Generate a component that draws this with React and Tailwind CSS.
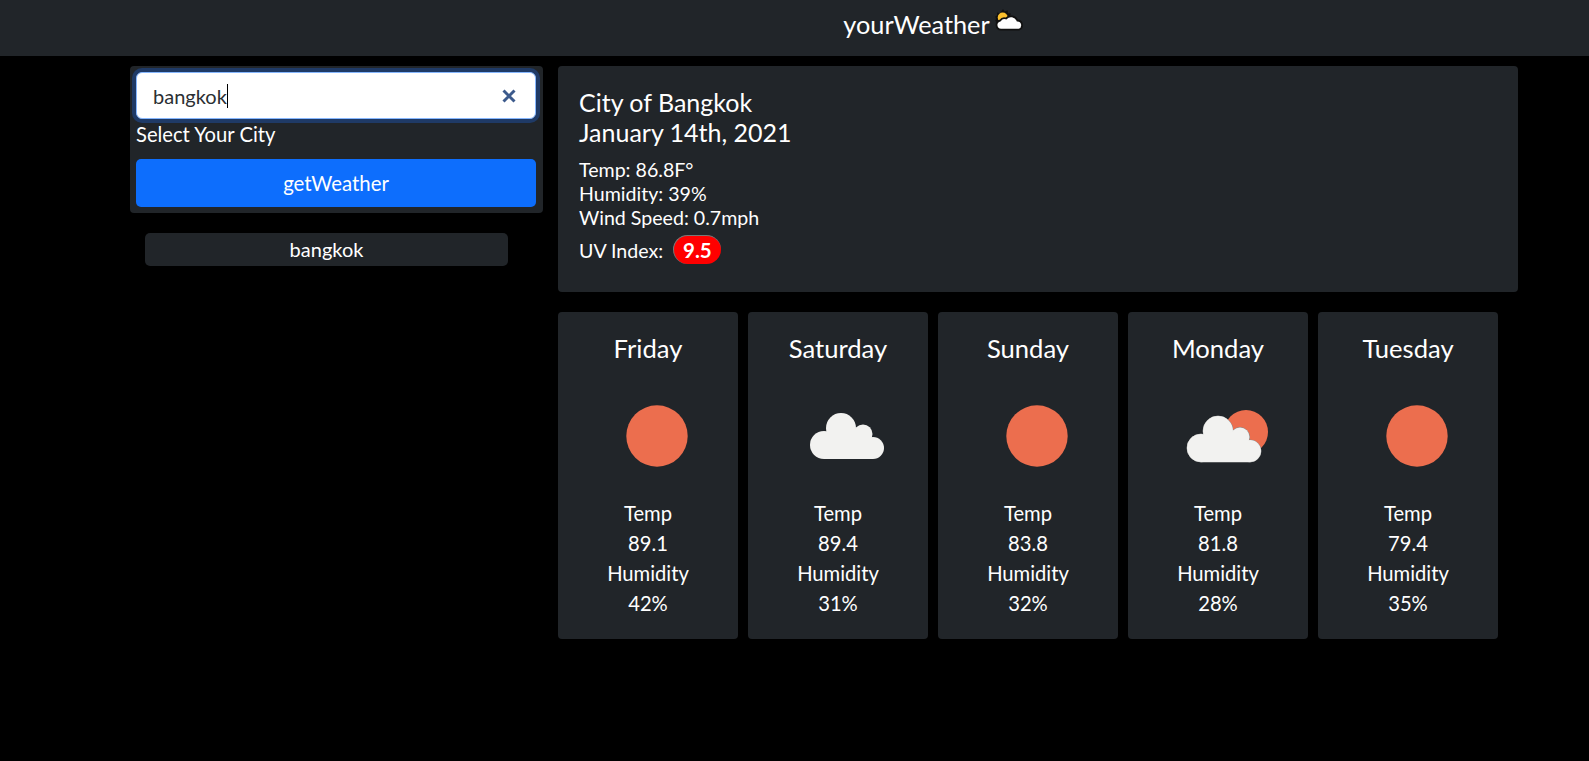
const days = [
  { day: "Friday", icon: "sun", temp: "89.1", humidity: "42%" },
  { day: "Saturday", icon: "cloud", temp: "89.4", humidity: "31%" },
  { day: "Sunday", icon: "sun", temp: "83.8", humidity: "32%" },
  { day: "Monday", icon: "partly", temp: "81.8", humidity: "28%" },
  { day: "Tuesday", icon: "sun", temp: "79.4", humidity: "35%" },
];

function CloudShape({ fill, stroke }) {
  return (
    <g fill={fill} stroke={stroke} strokeWidth={stroke ? 1 : 0}>
      <circle cx="44" cy="55" r="14" />
      <circle cx="61" cy="38" r="15" />
      <circle cx="83" cy="44" r="9.5" />
      <circle cx="93" cy="58" r="11" />
      <rect x="44" y="48" width="49" height="21" />
      <rect x="55" y="43" width="32" height="10" />
    </g>
  );
}

// all three weather icons share a 130x90 box
function WeatherIcon({ icon }) {
  return (
    <svg viewBox="0 0 130 90" className="w-[130px] h-[90px]">
      {icon === "sun" && <circle cx="74" cy="46" r="30.7" fill="#ec6e4e" />}
      {icon === "cloud" && (
        <g transform="translate(7 0)">
          <CloudShape fill="#f2f2f0" />
        </g>
      )}
      {icon === "partly" && (
        <g transform="translate(7 0)">
          <circle cx="86" cy="42" r="22" fill="#ec6e4e" />
          <g transform="translate(-3 3)">
            <CloudShape fill="#8a8c8c" stroke="#8a8c8c" />
            <CloudShape fill="#f2f2f0" />
          </g>
        </g>
      )}
    </svg>
  );
}

function HeaderEmoji() {
  return (
    <svg viewBox="0 0 28 22" className="w-[28px] h-[22px] ml-[5px] mb-[10px]">
      <path d="M8 0l1.8 2.4 2.8-1.2 0.4 3 3 0.4-1.2 2.8 2 2-6 7-8-3-2.6-1.4 0.8-2.2-0.8-2.4 1.8-0.8 0-3 3 0.6z" fill="#111" />
      <circle cx="7.7" cy="8.6" r="5" fill="#fbc02d" />
      <path d="M6 20.6a4.6 4.6 0 0 1-0.8-9.1 5 5 0 0 1 5.8-2 7 7 0 0 1 11.4 2 4.7 4.7 0 0 1 1.6 9.1z" fill="#fff" stroke="#111" strokeWidth="1.8" />
    </svg>
  );
}

export default function App() {
  return (
    <div className="min-h-[761px] bg-black text-white font-['Lato','Carlito',sans-serif]">
      <header className="h-[56px] bg-[#212529] flex items-center justify-center pl-[277px] pb-[6px]">
        <span className="text-[25.3px] leading-none">yourWeather</span>
        <HeaderEmoji />
      </header>

      <main className="flex items-start pl-[130px] pt-[10px]">
        <aside className="w-[413px] shrink-0">
          <div className="bg-[#212529] rounded-[4px] pl-[6px] pr-[7px] py-[6px]">
            <div className="h-[47px] bg-white rounded-[6px] border border-[#86b7fe] ring-4 ring-[#1f3a66] flex items-center justify-between pl-[16px] pr-[18px]">
              <span className="text-[20px] text-[#2b2f33] border-r border-black leading-[24px]">bangkok</span>
              <svg viewBox="0 0 16 16" className="w-[16px] h-[16px]">
                <path d="M2.5 2.5l11 11M13.5 2.5l-11 11" stroke="#3c5a8c" strokeWidth="3" fill="none" />
              </svg>
            </div>
            <div className="text-[20.2px] leading-[27px] mt-[2px]">Select Your City</div>
            <button className="mt-[11px] w-full h-[48px] bg-[#0d6efd] rounded-[5px] text-[20.4px] text-white">getWeather</button>
          </div>
          <button className="block ml-[15px] mt-[20px] w-[363px] h-[33px] pb-[1px] bg-[#212529] rounded-[5px] text-[20px] text-white">bangkok</button>
        </aside>

        <section className="ml-[15px] w-[960px] shrink-0">
          <div className="h-[226px] bg-[#212529] rounded-[4px] px-[21px] pt-[21px]">
            <h2 className="text-[25px] leading-[30px]">City of Bangkok</h2>
            <h2 className="text-[25px] leading-[30px]">January 14th, 2021</h2>
            <div className="mt-[11px] text-[19.6px] leading-[24px]">
              <div>Temp: 86.8F°</div>
              <div>Humidity: 39%</div>
              <div>Wind Speed: 0.7mph</div>
            </div>
            <div className="flex items-center mt-[6px] text-[19.6px]">
              <span>UV Index:</span>
              <span className="ml-[10px] -mt-[2px] px-[9px] h-[29px] flex items-center rounded-full bg-[#ff0000] font-bold text-[20.5px] border-t border-l border-[#777]">9.5</span>
            </div>
          </div>

          <div className="flex gap-[10px] mt-[20px]">
            {days.map((d) => (
              <div key={d.day} className="w-[180px] h-[327px] bg-[#212529] rounded-[4px] flex flex-col items-center pt-[18px]">
                <h3 className="text-[25.6px] leading-[36px]">{d.day}</h3>
                <div className="mt-[24px] h-[90px]">
                  <WeatherIcon icon={d.icon} />
                </div>
                <div className="mt-[18px] text-[20.2px] leading-[30px] text-center">
                  <div>Temp</div>
                  <div>{d.temp}</div>
                  <div>Humidity</div>
                  <div>{d.humidity}</div>
                </div>
              </div>
            ))}
          </div>
        </section>
      </main>
    </div>
  );
}
